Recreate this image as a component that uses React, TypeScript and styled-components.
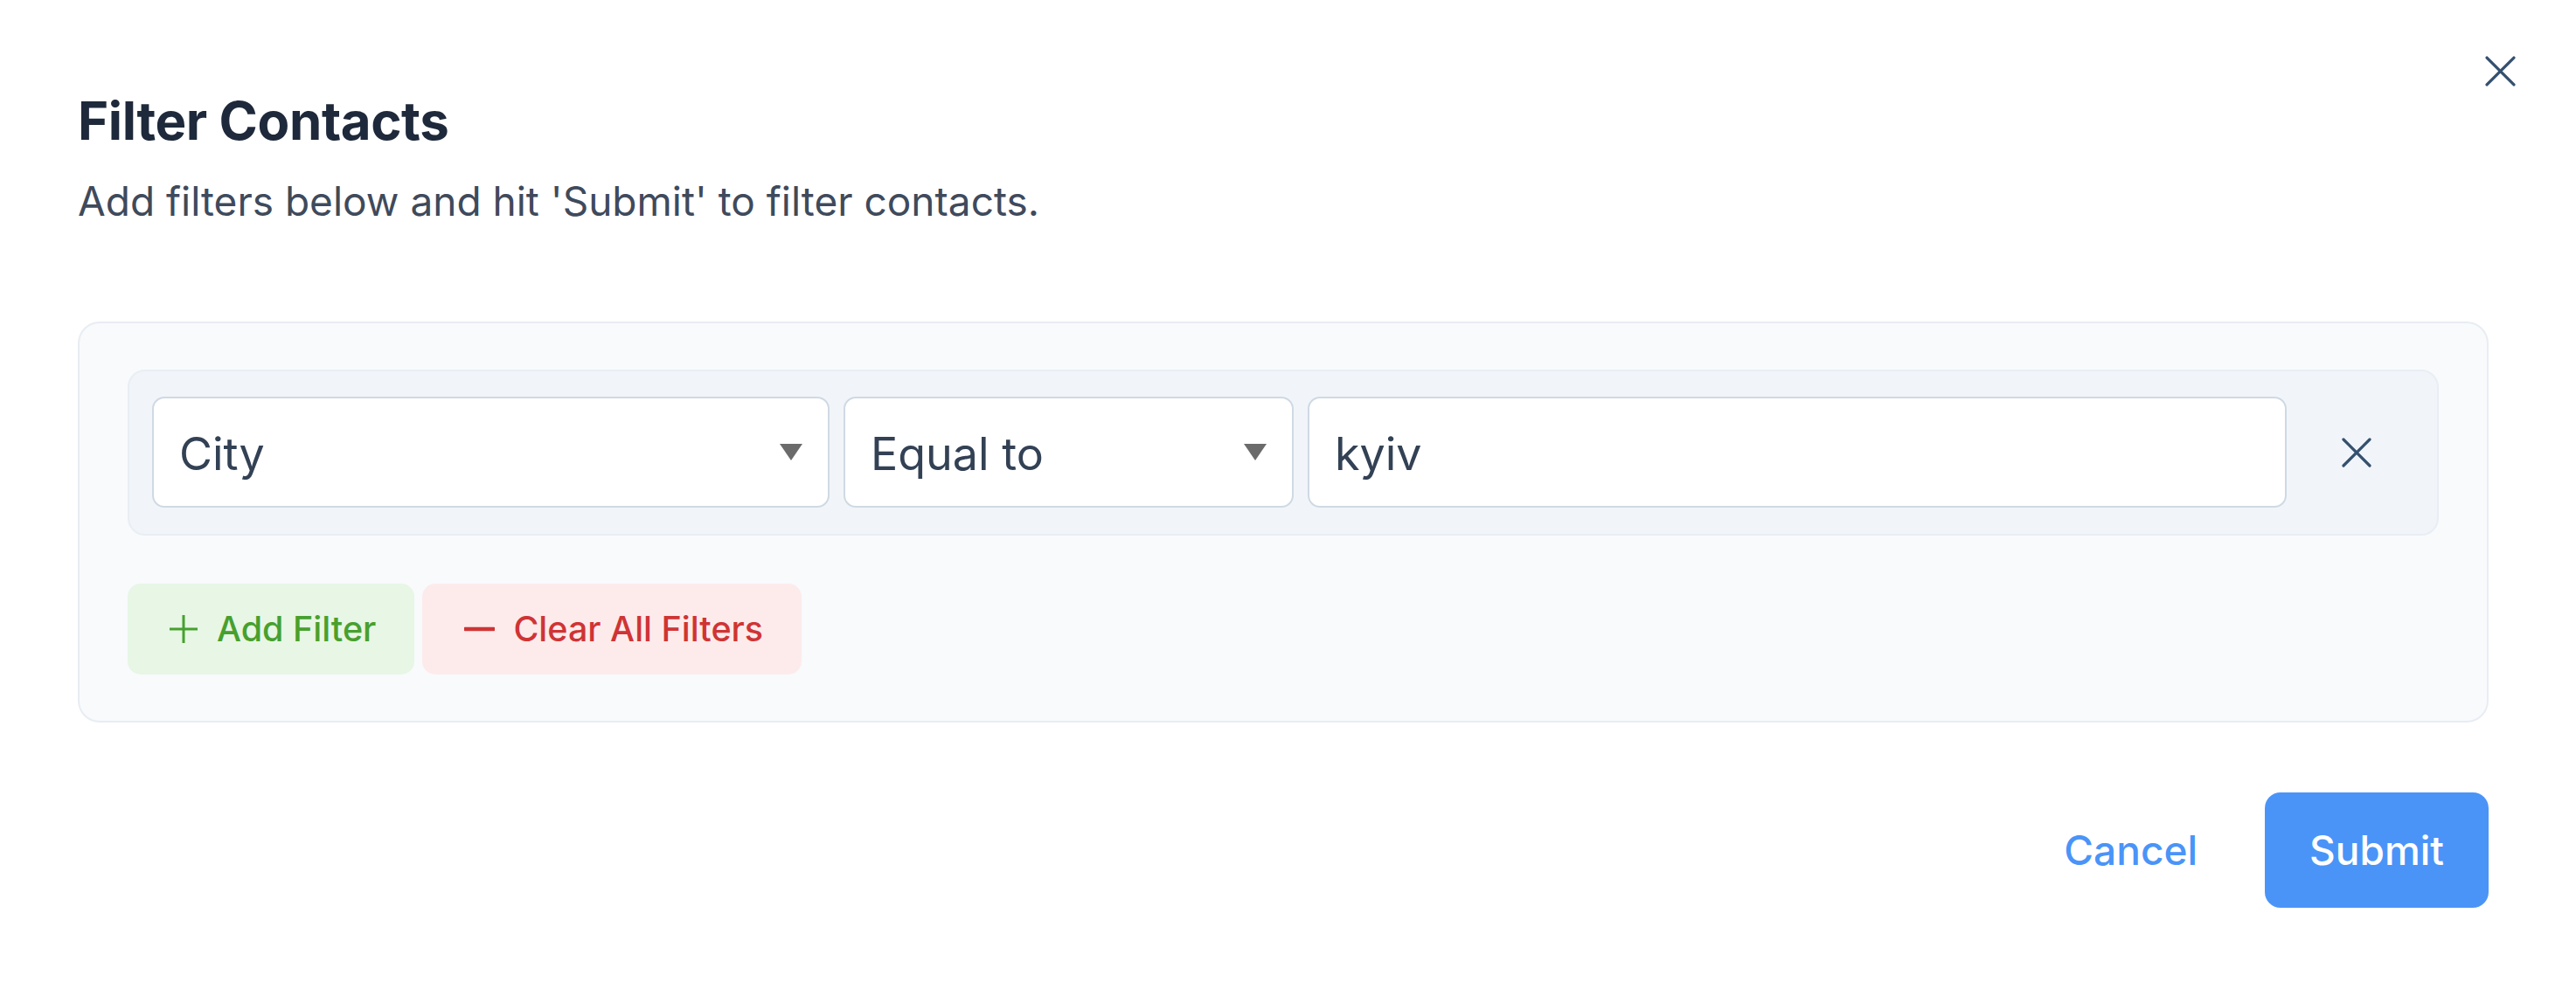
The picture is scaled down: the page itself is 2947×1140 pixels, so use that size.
import React from 'react';
import styled, {createGlobalStyle} from 'styled-components';

const GlobalStyle = createGlobalStyle`
  html, body {
    margin: 0;
    padding: 0;
    background: #ffffff;
  }
  body {
    font-family: Inter, "Noto Sans", "Liberation Sans", sans-serif;
    color: #334155;
  }
  * {
    box-sizing: border-box;
  }
`;

const Dialog = styled.div`
  position: relative;
  padding: 102px 100px 0 89px;
`;

const CloseButton = styled.button`
  position: absolute;
  top: 51px;
  right: 57px;
  width: 60px;
  height: 60px;
  border: none;
  background: transparent;
  padding: 0;
  display: flex;
  align-items: center;
  justify-content: center;
  color: #34506f;
  cursor: pointer;
`;

const Title = styled.h2`
  margin: 0;
  font-size: 60px;
  line-height: 72px;
  font-weight: 700;
  color: #1e293b;
  letter-spacing: -0.4px;
`;

const Subtitle = styled.p`
  margin: 30px 0 0;
  font-size: 46px;
  line-height: 53px;
  font-weight: 400;
  color: #3f4a5c;
`;

const FilterPanel = styled.div`
  margin-top: 111px;
  padding: 53px 55px;
  background: #f8fafc;
  border: 2px solid #e8edf3;
  border-radius: 25px;
  display: flex;
  flex-direction: column;
  gap: 55px;
`;

const FilterRow = styled.div`
  display: flex;
  align-items: center;
  gap: 16px;
  padding: 29px 44px 30px 26px;
  background: #f1f5f9;
  border: 2px solid #e9eef4;
  border-radius: 20px;
`;

const SelectField = styled.div<{$width: number}>`
  flex: 0 0 ${p => p.$width}px;
  height: 127px;
  display: flex;
  align-items: center;
  justify-content: space-between;
  padding: 4px 29px 0 29px;
  background: #ffffff;
  border: 2px solid #cfd9e4;
  border-radius: 14px;
  font-size: 52px;
  color: #334155;
`;

const Caret = styled.span`
  width: 0;
  height: 0;
  margin-top: -4px;
  border-left: 13px solid transparent;
  border-right: 13px solid transparent;
  border-top: 19px solid #6b6b6b;
`;

const TextInput = styled.input`
  flex: 1 1 auto;
  min-width: 0;
  height: 127px;
  padding: 4px 29px 0;
  background: #ffffff;
  border: 2px solid #cfd9e4;
  border-radius: 14px;
  font-family: inherit;
  font-size: 52px;
  color: #334155;
  outline: none;
`;

const RemoveButton = styled.button`
  flex: 0 0 96px;
  height: 96px;
  margin-left: 16px;
  border: none;
  background: transparent;
  padding: 0;
  display: flex;
  align-items: center;
  justify-content: center;
  color: #34506f;
  cursor: pointer;
`;

const Actions = styled.div`
  display: flex;
  gap: 9px;
`;

const ActionButton = styled.button<{$tone: 'add' | 'clear'}>`
  height: 104px;
  display: inline-flex;
  align-items: center;
  gap: 21px;
  padding: 0 44px 0 ${p => (p.$tone === 'add' ? 47 : 48)}px;
  border: none;
  border-radius: 15px;
  font-family: inherit;
  font-size: 39.5px;
  font-weight: 500;
  background: ${p => (p.$tone === 'add' ? '#e7f6e5' : '#fdebec')};
  color: ${p => (p.$tone === 'add' ? '#47a02e' : '#cf3434')};
  cursor: pointer;
`;

const Footer = styled.div`
  margin-top: 80px;
  display: flex;
  justify-content: flex-end;
  align-items: center;
  gap: 29px;
`;

const CancelButton = styled.button`
  height: 132px;
  padding: 0 48px;
  border: none;
  background: transparent;
  font-family: inherit;
  font-size: 46px;
  font-weight: 500;
  color: #4a94f8;
  cursor: pointer;
`;

const SubmitButton = styled.button`
  height: 132px;
  padding: 0 51px;
  border: none;
  border-radius: 18px;
  background: #4a94f8;
  font-family: inherit;
  font-size: 46px;
  font-weight: 500;
  color: #ffffff;
  cursor: pointer;
`;

const CrossIcon: React.FC<{size: number}> = ({size}) => (
  <svg width={size} height={size} viewBox="0 0 34 34" fill="none">
    <path d="M2 2 L32 32 M32 2 L2 32" stroke="currentColor" strokeWidth="3.2" strokeLinecap="round" />
  </svg>
);

const PlusIcon = () => (
  <svg width="34" height="34" viewBox="0 0 34 34" fill="none">
    <path d="M17 1 V33 M1 17 H33" stroke="currentColor" strokeWidth="3" />
  </svg>
);

const MinusIcon = () => (
  <svg width="35" height="34" viewBox="0 0 35 34" fill="none">
    <path d="M1 17 H34" stroke="currentColor" strokeWidth="4.5" strokeLinecap="round" />
  </svg>
);

const App: React.FC = () => {
  return (
    <>
      <GlobalStyle />
      <Dialog>
        <CloseButton aria-label="Close">
          <CrossIcon size={35} />
        </CloseButton>
        <Title>Filter Contacts</Title>
        <Subtitle>Add filters below and hit 'Submit' to filter contacts.</Subtitle>
        <FilterPanel>
          <FilterRow>
            <SelectField $width={775}>
              <span>City</span>
              <Caret />
            </SelectField>
            <SelectField $width={515}>
              <span>Equal to</span>
              <Caret />
            </SelectField>
            <TextInput defaultValue="kyiv" />
            <RemoveButton aria-label="Remove filter">
              <CrossIcon size={34} />
            </RemoveButton>
          </FilterRow>
          <Actions>
            <ActionButton $tone="add">
              <PlusIcon />
              Add Filter
            </ActionButton>
            <ActionButton $tone="clear">
              <MinusIcon />
              Clear All Filters
            </ActionButton>
          </Actions>
        </FilterPanel>
        <Footer>
          <CancelButton>Cancel</CancelButton>
          <SubmitButton>Submit</SubmitButton>
        </Footer>
      </Dialog>
    </>
  );
};

export default App;
